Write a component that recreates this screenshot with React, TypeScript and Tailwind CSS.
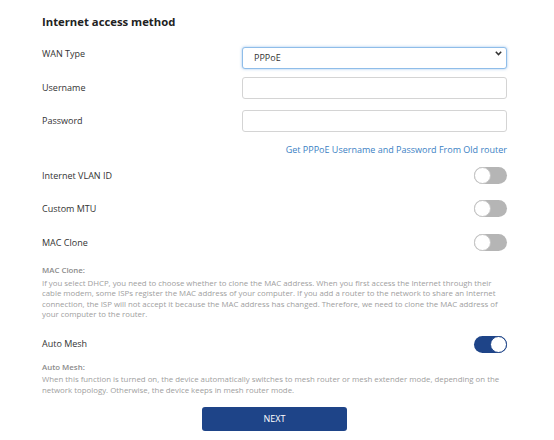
import { useState } from 'react';

function Toggle({ on }: { on: boolean }) {
  return (
    <div
      className={`relative w-[33px] h-[17px] rounded-full ${
        on ? 'bg-[#1e4488]' : 'bg-[#b5b5b5]'
      }`}
    >
      <div
        className={`absolute top-0 h-[17px] w-[17px] rounded-full bg-white border ${
          on ? 'right-0 border-[#1e4488]' : 'left-0 border-[#c4c4c4]'
        }`}
      />
    </div>
  );
}

export default function App() {
  const [wan, setWan] = useState('PPPoE');

  return (
    <div className="w-[554px] h-[440px] bg-white text-[#333] font-['Open_Sans',sans-serif]">
      <div className="w-[465px] ml-[42px] pt-[14px] flex flex-col">
        {/* Heading */}
        <h1 className="h-[16px] leading-[16px] text-[11.3px] font-bold text-[#222]">
          Internet access method
        </h1>

        {/* WAN Type */}
        <div className="mt-[13px] h-[22px] flex items-center justify-between">
          <span className="text-[9px]">WAN Type</span>
          <div className="relative w-[265px] h-[22px]">
            <select
              value={wan}
              onChange={(e) => setWan(e.target.value)}
              className="appearance-none w-full h-full rounded-[3px] border border-[#8fbde9] shadow-[0_0_3px_rgba(80,150,220,0.55)] bg-white pl-[11px] text-[9px] text-[#333] outline-none"
            >
              <option>PPPoE</option>
              <option>DHCP</option>
              <option>Static IP</option>
            </select>
            <svg
              className="absolute right-[5px] top-[8px] pointer-events-none"
              width="7"
              height="5"
              viewBox="0 0 7 5"
            >
              <path d="M0.8 0.8 L3.5 3.6 L6.2 0.8" fill="none" stroke="#333" strokeWidth="1.5" />
            </svg>
          </div>
        </div>

        {/* Username */}
        <div className="mt-[12px] h-[22px] flex items-center justify-between">
          <span className="text-[9px]">Username</span>
          <input className="w-[265px] h-[22px] rounded-[3px] border border-[#d4d4d4] outline-none px-2 text-[9px]" />
        </div>

        {/* Password */}
        <div className="mt-[11px] h-[22px] flex items-center justify-between">
          <span className="text-[9px]">Password</span>
          <input
            type="password"
            className="w-[265px] h-[22px] rounded-[3px] border border-[#d4d4d4] outline-none px-2 text-[9px]"
          />
        </div>

        {/* Link */}
        <div className="mt-[11px] h-[14px] flex items-center justify-end">
          <a className="text-[9px] text-[#3b7fc4] cursor-pointer">
            Get PPPoE Username and Password From Old router
          </a>
        </div>

        {/* Toggles */}
        <div className="mt-[10px] h-[17px] flex items-center justify-between">
          <span className="text-[9px]">Internet VLAN ID</span>
          <Toggle on={false} />
        </div>
        <div className="mt-[16px] h-[17px] flex items-center justify-between">
          <span className="text-[9px]">Custom MTU</span>
          <Toggle on={false} />
        </div>
        <div className="mt-[17px] h-[17px] flex items-center justify-between">
          <span className="text-[9px]">MAC Clone</span>
          <Toggle on={false} />
        </div>

        {/* MAC Clone description */}
        <div className="mt-[14px] text-[7.85px] leading-[10.5px] text-[#a0a0a0]">
          <div className="font-semibold text-[#8c8c8c]">MAC Clone:</div>
          <p className="mt-[2px]">
            If you select DHCP, you need to choose whether to clone the MAC address. When you first
            access the Internet through their cable modem, some ISPs register the MAC address of your
            computer. If you add a router to the network to share an Internet connection, the ISP will
            not accept it because the MAC address has changed. Therefore, we need to clone the MAC
            address of your computer to the router.
          </p>
        </div>

        {/* Auto Mesh */}
        <div className="mt-[16px] h-[17px] flex items-center justify-between">
          <span className="text-[9px]">Auto Mesh</span>
          <Toggle on={true} />
        </div>
        <div className="mt-[9px] text-[7.85px] leading-[11px] text-[#a0a0a0]">
          <div className="font-semibold text-[#8c8c8c]">Auto Mesh:</div>
          <p className="mt-[1px]">
            When this function is turned on, the device automatically switches to mesh router or mesh
            extender mode, depending on the network topology. Otherwise, the device keeps in mesh
            router mode.
          </p>
        </div>

        {/* Next */}
        <div className="mt-[11px] flex justify-center">
          <button className="w-[145px] h-[24px] rounded-[3px] bg-[#1e4488] text-white text-[9px]">
            NEXT
          </button>
        </div>
      </div>
    </div>
  );
}
